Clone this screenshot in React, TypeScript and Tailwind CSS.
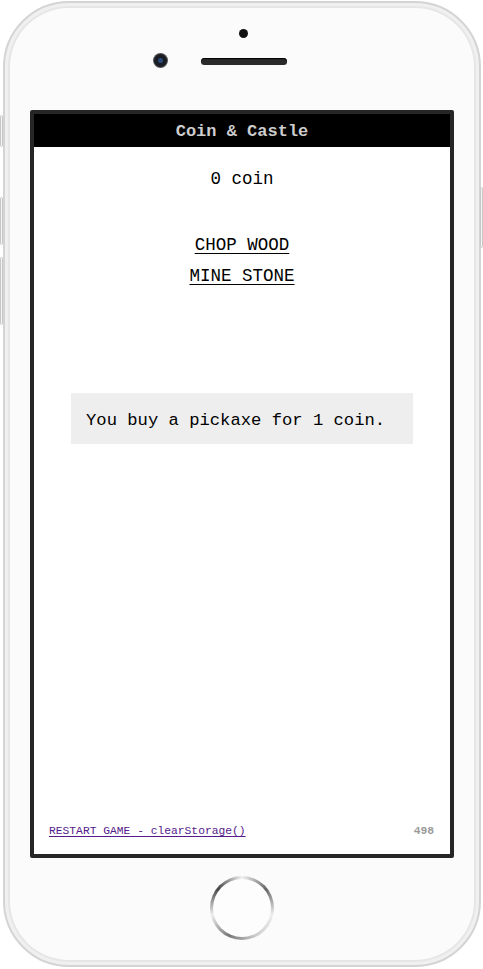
import React from "react";

const mono = { fontFamily: '"Liberation Mono", "Courier New", monospace' };

function SideButton({ className }: { className: string }) {
  return <div className={`absolute w-[3px] rounded-sm border border-[#c8c8c8] bg-[#f4f4f4] ${className}`} />;
}

export default function App() {
  return (
    <div className="relative h-[969px] w-[483px] overflow-hidden bg-white">
      <SideButton className="left-0 top-[115px] h-[32px]" />
      <SideButton className="left-0 top-[197px] h-[48px]" />
      <SideButton className="left-0 top-[257px] h-[68px]" />
      <SideButton className="right-0 top-[187px] h-[61px]" />

      <div className="ml-[3px] mt-[1px] flex h-[966px] w-[478px] flex-col items-center rounded-[66px] border-[2px] border-[#d4d4d4] bg-[#fbfbfb] shadow-[inset_0_0_0_3px_#f0f0f0,inset_0_0_0_5px_#e6e6e6]">
        {/* top: sensor, camera, speaker */}
        <div className="relative h-[107px] w-full">
          <div className="absolute left-[234px] top-[26px] h-[9px] w-[9px] rounded-full bg-[#111]" />
          <div className="absolute left-[149px] top-[51px] flex h-[13px] w-[13px] items-center justify-center rounded-full bg-[#1a1d24] shadow-[0_0_0_1px_#555]">
            <div className="h-[5px] w-[5px] rounded-full bg-[#2b4a7a]" />
          </div>
          <div className="absolute left-[196px] top-[55px] h-[7px] w-[86px] rounded-full bg-[#2a2a2a] shadow-[inset_0_1px_1px_#000]" />
        </div>

        {/* screen */}
        <div className="flex h-[748px] w-[424px] flex-col rounded-[2px] border-[4px] border-[#262626] bg-white" style={mono}>
          <div className="flex h-[33px] shrink-0 items-center justify-center bg-black pt-[3px] text-[17px] font-bold text-[#cdcdcd]">
            Coin &amp; Castle
          </div>
          <div className="mt-[20px] text-center text-[17.5px] leading-[24px] text-black">0 coin</div>
          <div className="mt-[42px] flex flex-col items-center gap-[7px] text-[17.5px] leading-[24px]">
            <a className="text-black underline underline-offset-[3px]">CHOP WOOD</a>
            <a className="text-black underline underline-offset-[3px]">MINE STONE</a>
          </div>
          <div className="mx-auto mt-[105px] flex h-[51px] w-[342px] items-center bg-[#eeeeee] px-[15px] pt-[4px] text-[17.2px] text-black">
            You buy a pickaxe for 1 coin.
          </div>
          <div className="flex-1" />
          <div className="flex items-center justify-between pb-[16px] pl-[15px] pr-[16px] text-[11.3px] leading-[14px]">
            <a className="text-[#551a8b] underline underline-offset-[2px]">RESTART GAME - clearStorage()</a>
            <span className="font-bold text-[#999]">498</span>
          </div>
        </div>

        {/* home button */}
        <div className="flex flex-1 items-center justify-center pb-[8px]">
          <div className="flex h-[64px] w-[64px] items-center justify-center rounded-full bg-[conic-gradient(from_0deg,#f2f2f2,#666,#eee,#ccc,#777,#eee,#444,#f2f2f2)]">
            <div className="h-[58px] w-[58px] rounded-full bg-[#fdfdfd]" />
          </div>
        </div>
      </div>
    </div>
  );
}
